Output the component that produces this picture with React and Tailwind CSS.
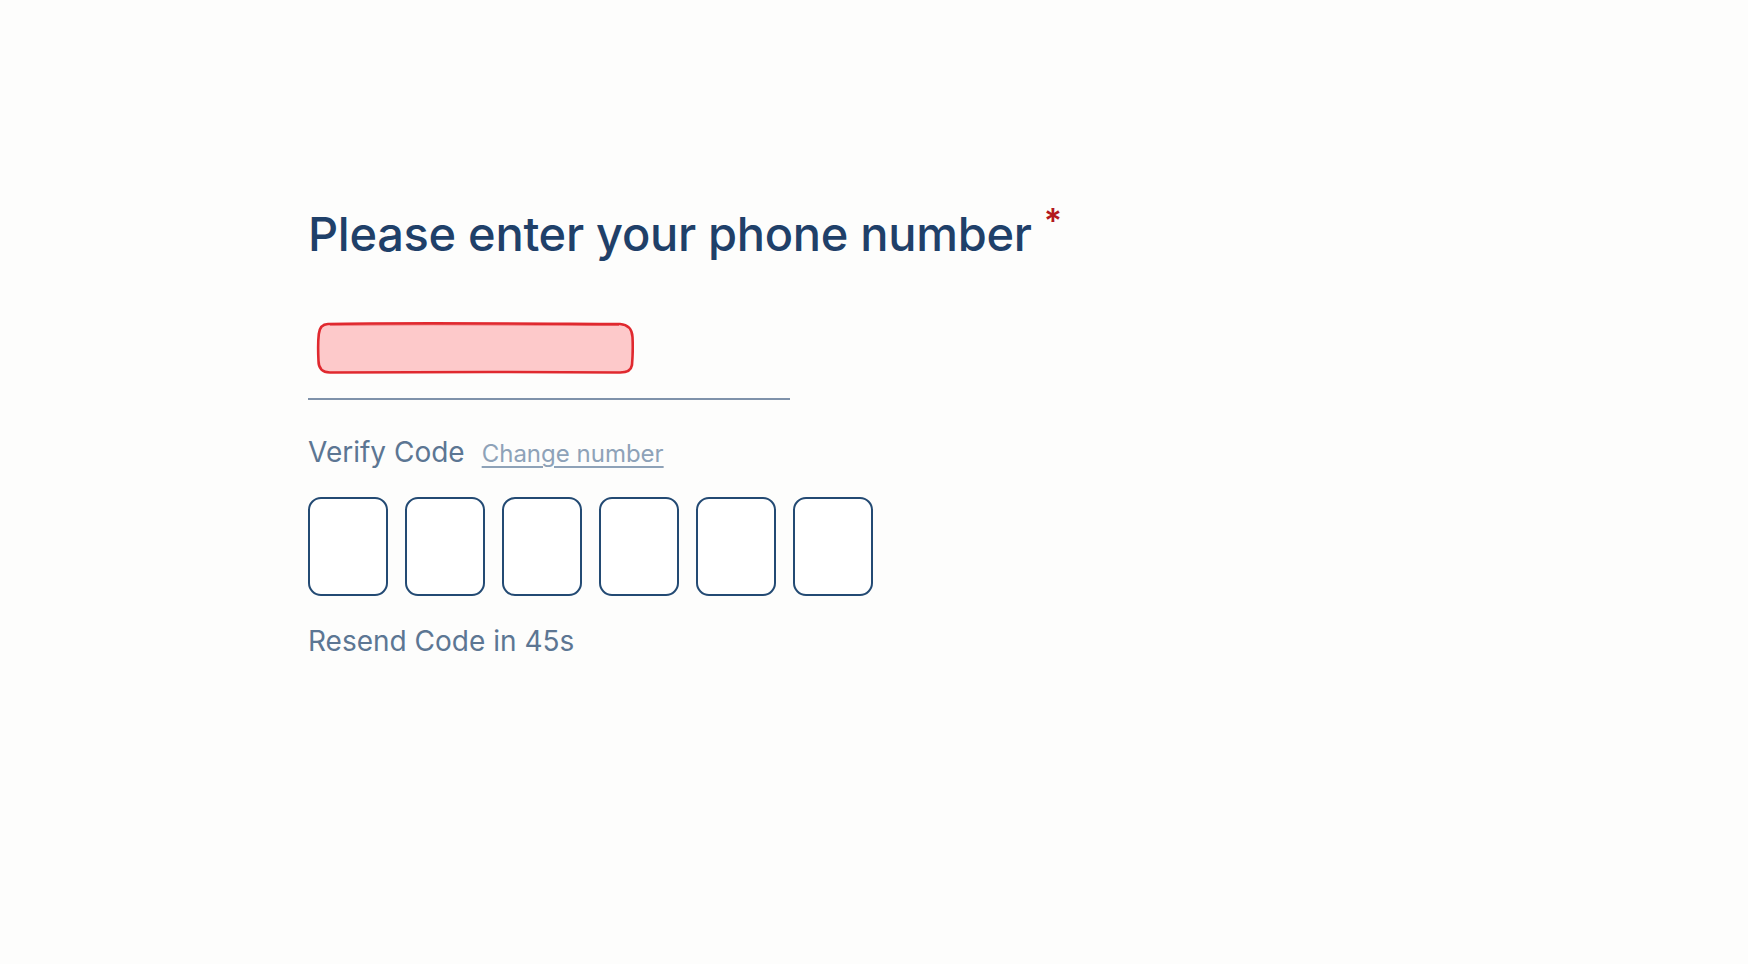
import React from 'react';

const font = { fontFamily: 'Inter, "Noto Sans", sans-serif' };

// Marker-style highlight that covers the number in the field
const ScribbleBox = () => (
  <svg width="318" height="54" viewBox="0 0 318 54" className="block">
    <path
      d="M12 3 C80 1.5 200 2.5 304 3 C312 3.5 316 8 316.5 16 C317 26 316.5 38 316 44 C315 50 310 52 302 51.5 C200 50.5 90 51 14 51.5 C6 51.5 2.5 47 2.5 40 C2 30 2 20 2.8 13 C3.5 6 7 3.2 12 3 Z"
      fill="#fdc9ca"
      stroke="#e0292f"
      strokeWidth="2.6"
      strokeLinejoin="round"
    />
    <path
      d="M14 4.2 C90 3.2 210 3.8 303 4.4"
      fill="none"
      stroke="#e0292f"
      strokeWidth="1.2"
      opacity="0.6"
    />
  </svg>
);

const CodeBox = () => (
  <div className="w-[80px] h-[99px] rounded-[13px] border-2 border-[#234a73] bg-white" />
);

export default function App() {
  return (
    <div className="min-h-screen bg-[#fdfdfc] pl-[308px] pt-[210px]" style={font}>
      <div className="flex items-start">
        <h1 className="text-[47px] leading-[47px] font-medium tracking-[-0.3px] text-[#1f4069]">
          Please enter your phone number
        </h1>
        <span className="ml-[12px] -mt-[6px] text-[34px] leading-none font-semibold text-[#b3191d]">*</span>
      </div>

      <div className="mt-[67px] w-[482px] border-b-2 border-[#7f92aa] pb-[23px]">
        <div className="ml-[8px] -mt-[3px]">
          <ScribbleBox />
        </div>
      </div>

      <div className="mt-[38px] flex items-baseline gap-[17px]">
        <span className="text-[28px] leading-none text-[#5c7693]">Verify Code</span>
        <a href="#" className="text-[24px] leading-none text-[#8ea2b8] underline underline-offset-[4px]">
          Change number
        </a>
      </div>

      <div className="mt-[31px] flex gap-[17px]">
        <CodeBox />
        <CodeBox />
        <CodeBox />
        <CodeBox />
        <CodeBox />
        <CodeBox />
      </div>

      <p className="mt-[31px] text-[28px] leading-none text-[#5c7693]">Resend Code in 45s</p>
    </div>
  );
}
